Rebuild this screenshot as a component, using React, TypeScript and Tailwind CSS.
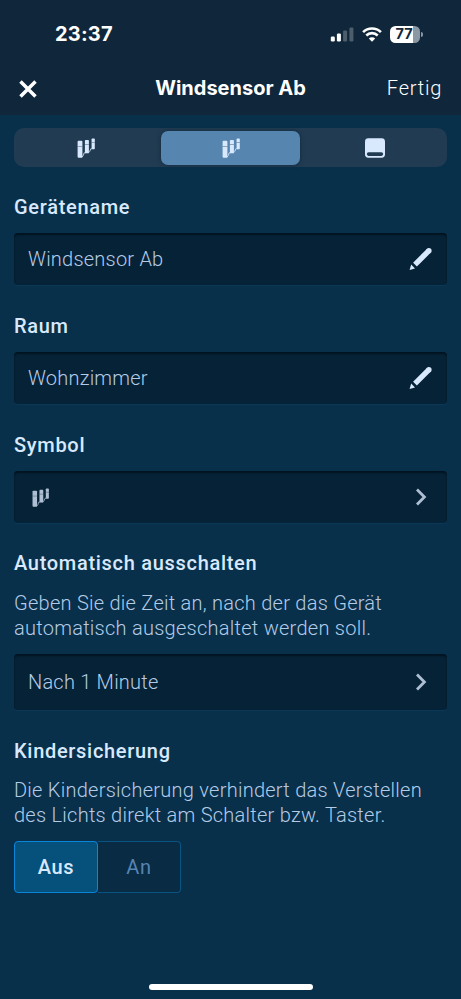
import type { ReactNode } from "react";

function BlindsIcon({ className }: { className?: string }) {
  return (
    <svg viewBox="0 0 20 20" className={className} fill="currentColor">
      <rect x="1.6" y="2.8" width="4.8" height="17" rx="1" />
      <rect x="8.9" y="1.9" width="4" height="13.4" rx="0.9" />
      <rect x="15.6" y="0.4" width="3.2" height="10.8" rx="0.8" />
      <path d="M1.6 8.5H6.4M8.9 6.5H12.9M15.6 4.5H18.8" stroke="#213c52" strokeOpacity="0.5" strokeWidth="0.8" />
      <path d="M5.8 19.4L7.2 17.6L8.2 14.8H9.6M12.2 15L13.6 13.6L14.8 10.8H16" fill="none" stroke="currentColor" strokeOpacity="0.8" strokeWidth="1" />
    </svg>
  );
}

function SwitchIcon() {
  return (
    <svg width="20" height="20" viewBox="0 0 20 20" className="text-[#d9e9fd]">
      <rect x="0" y="0.3" width="20" height="19.4" rx="3.4" fill="currentColor" />
      <rect x="1.8" y="14.3" width="16.4" height="3.6" rx="1.8" fill="#213c52" />
    </svg>
  );
}

function PencilIcon() {
  return (
    <svg width="24" height="24" viewBox="0 0 24 24" fill="none" className="text-[#d9e9fd]">
      <path d="M6 17.6L19.7 3.9" stroke="currentColor" strokeWidth="5.4" />
      <circle cx="19.9" cy="3.7" r="2.7" fill="currentColor" />
      <path d="M2.2 17.6L6 21.5L0.6 23Z" fill="currentColor" />
    </svg>
  );
}

function ChevronIcon() {
  return (
    <svg width="12" height="18" viewBox="0 0 12 18" fill="none" stroke="#afbfd3" strokeWidth="2.8">
      <path d="M2 1.6L9.4 9L2 16.4" />
    </svg>
  );
}

function StatusBar() {
  return (
    <div className="flex h-[68px] items-center justify-between pl-[55px] pr-[38px]">
      <span className="font-[Inter] text-[20px] font-bold leading-6 tracking-[0.2px]">23:37</span>
      <div className="flex items-center gap-2">
        <svg width="24" height="15" viewBox="0 0 24 15" fill="#fff">
          <rect x="0.8" y="9.5" width="4" height="5" rx="1.2" />
          <rect x="6.9" y="6.5" width="4" height="8" rx="1.2" />
          <rect x="13.1" y="3.6" width="4" height="10.9" rx="1.2" opacity="0.25" />
          <rect x="19.4" y="0.4" width="4" height="14.1" rx="1.2" opacity="0.25" />
        </svg>
        <svg width="20" height="15" viewBox="0 0 20 15" fill="none" stroke="#fff" strokeWidth="2.6">
          <path d="M1.1 5.2A12.6 12.6 0 0 1 18.9 5.2" />
          <path d="M4.3 8.5A8.1 8.1 0 0 1 15.7 8.5" />
          <path d="M10 14.8L6.8 11.6A4.5 4.5 0 0 1 13.2 11.6Z" fill="#fff" stroke="none" />
        </svg>
        <div className="flex items-center gap-px">
          <div className="flex h-[17px] w-[30px] items-center overflow-hidden rounded-[5.5px] bg-[linear-gradient(to_right,#fff_77%,#8b98a3_77%)] pl-[5.5px] font-[Inter] text-[14.5px] font-bold leading-none text-[#10273b]">
            77
          </div>
          <div className="h-[5px] w-[2px] rounded-r-full bg-[#8b98a3]" />
        </div>
      </div>
    </div>
  );
}

function Section({ title, text, children }: { title: string; text?: string; children: ReactNode }) {
  return (
    <section className="flex flex-col">
      <h2 className="text-[20px] font-[480] leading-[25px] tracking-[0.7px] text-[#d9e9fd]">{title}</h2>
      {text && (
        <p className="mt-[14.5px] whitespace-pre-line text-[20px] leading-[25px] tracking-[0.26px] text-[#b4cbe6]">
          {text}
        </p>
      )}
      <div className="mt-[13px]">{children}</div>
    </section>
  );
}

function Field({ children, icon, tall }: { children: ReactNode; icon: ReactNode; tall?: boolean }) {
  return (
    <button
      className={[
        "flex w-full items-center justify-between rounded-[4px] bg-[#062237] pl-3.5 text-[20px] tracking-[0.22px] text-[#b4cbe6] shadow-[inset_0_2px_2px_#021320,0_1px_0_#0b3857]",
        tall ? "h-14" : "h-[52px]",
      ].join(" ")}
    >
      {children}
      <span className="flex w-[52px] justify-center">{icon}</span>
    </button>
  );
}

export default function App() {
  return (
    <div className="flex h-[999px] w-[461px] flex-col bg-[#08304b] font-['Roboto',sans-serif] font-light text-white">
      <header className="h-[115px] bg-[#10273b]">
        <StatusBar />
        <div className="grid grid-cols-[1fr_auto_1fr] items-center px-[19px] pt-[7px]">
          <svg width="18" height="18" viewBox="0 0 18 18" stroke="#fff" strokeWidth="3.5">
            <path d="M1.5 1.5L16.5 16.5M16.5 1.5L1.5 16.5" />
          </svg>
          <h1 className="font-[Inter] text-[20px] font-bold leading-[25px]">Windsensor Ab</h1>
          <span className="justify-self-end text-[20px] leading-[27px] tracking-[0.75px]">Fertig</span>
        </div>
      </header>

      <main className="flex flex-1 flex-col px-3.5 pt-[13px]">
        <div className="grid h-[39px] grid-cols-[144px_1fr_144px] items-center rounded-[10px] bg-[#213c52] text-[#d9e9fd]">
          <div className="flex justify-center">
            <BlindsIcon className="size-5" />
          </div>
          <div className="mx-[3px] flex h-[34px] items-center justify-center rounded-[7px] bg-[#5685b0] shadow-[0_0_4px_#10273b]">
            <BlindsIcon className="size-5" />
          </div>
          <div className="flex justify-center">
            <SwitchIcon />
          </div>
        </div>

        <div className="mt-[28px] flex flex-col gap-[29px]">
          <Section title="Gerätename">
            <Field icon={<PencilIcon />}>Windsensor Ab</Field>
          </Section>
          <Section title="Raum">
            <Field icon={<PencilIcon />}>Wohnzimmer</Field>
          </Section>
          <Section title="Symbol">
            <Field icon={<ChevronIcon />}>
              <BlindsIcon className="ml-[3px] size-[19px] text-[#afbfd3]" />
            </Field>
          </Section>
          <div className="-mt-px flex flex-col gap-[29px]">
            <Section
              title="Automatisch ausschalten"
              text={"Geben Sie die Zeit an, nach der das Gerät\nautomatisch ausgeschaltet werden soll."}
            >
              <Field icon={<ChevronIcon />} tall>
                Nach 1 Minute
              </Field>
            </Section>
            <Section
              title="Kindersicherung"
              text={"Die Kindersicherung verhindert das Verstellen\ndes Lichts direkt am Schalter bzw. Taster."}
            >
              <div className="flex h-[52px] w-[167px] text-[20px] font-[480] tracking-[0.6px]">
                <button className="w-[84px] rounded-[4px] border border-[#0a85dc] bg-[#06507c] text-[#d9e9fd]">
                  Aus
                </button>
                <button className="flex-1 rounded-r-[4px] border border-l-0 border-[#075482] bg-[#092b43] font-normal text-[#5684b4]">
                  An
                </button>
              </div>
            </Section>
          </div>
        </div>
      </main>

      <div className="mb-[9px] ml-[149px] h-[6px] w-[164px] rounded-full bg-white" />
    </div>
  );
}
